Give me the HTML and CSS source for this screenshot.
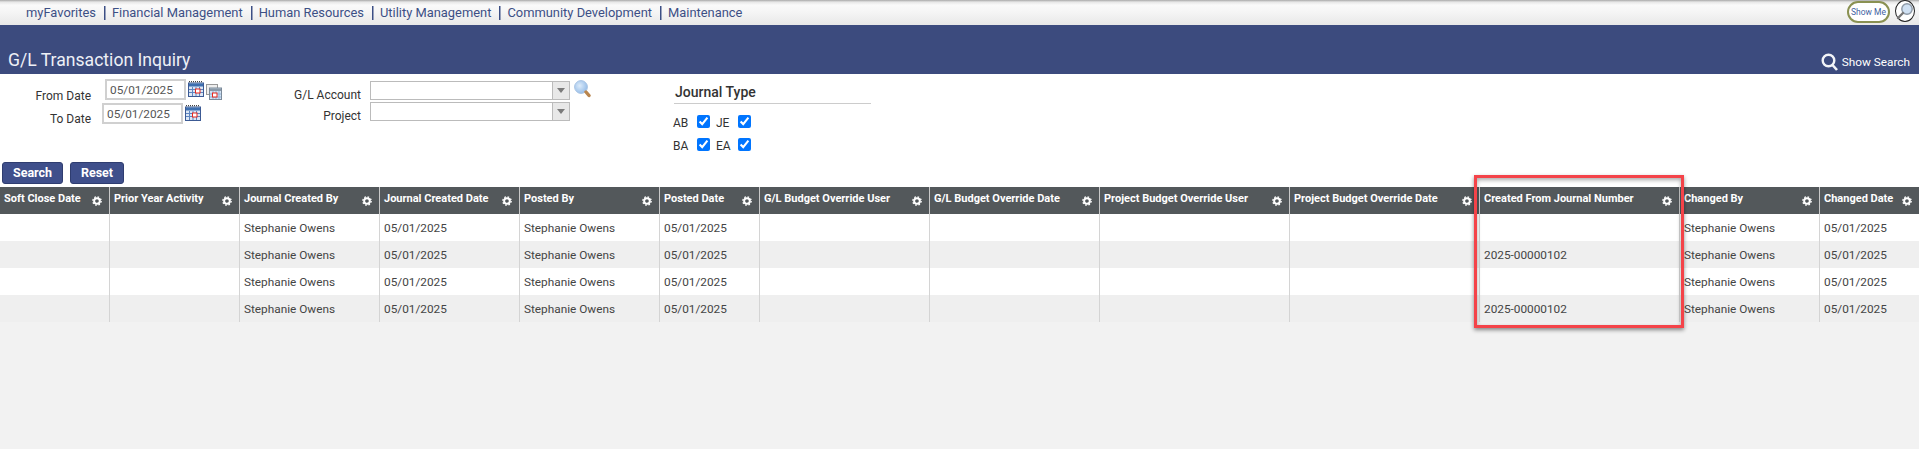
FILE: index.html
```html
<!DOCTYPE html>
<html lang="en">
<head>
<meta charset="utf-8">
<title>G/L Transaction Inquiry</title>
<link rel="stylesheet" href="styles.css">
</head>
<body>
<svg class="defs" width="0" height="0" aria-hidden="true">
  <symbol id="gear" viewBox="0 0 12 12">
    <circle cx="6" cy="6" r="3.4" fill="none" stroke="#fff" stroke-width="2.4"/>
    <circle cx="6" cy="6" r="5" fill="none" stroke="#fff" stroke-width="1.6" stroke-dasharray="2 1.93"/>
  </symbol>
  <symbol id="cal" viewBox="0 0 16 16">
    <rect x="0.5" y="2" width="15" height="13.5" fill="#dbe6f5" stroke="#3c5a94"/>
    <rect x="1" y="2.5" width="14" height="3" fill="#3d6fb0"/>
    <path d="M1 0.5h14" stroke="#444" stroke-width="1.4" stroke-dasharray="1 1"/>
    <path d="M1 8.5h14M1 11.5h14M4.5 6v9M8 6v9M11.5 6v9" stroke="#5f86c0" stroke-width="1"/>
    <rect x="7.5" y="8" width="4.5" height="4" fill="#fff" stroke="#e8261c"/>
  </symbol>
  <symbol id="calmulti" viewBox="0 0 16 16">
    <rect x="0.5" y="0.5" width="11" height="10" fill="#eee" stroke="#999"/>
    <rect x="3.5" y="4" width="12" height="11.5" fill="#d4e3f3" stroke="#7b8a9a"/>
    <rect x="4" y="4.5" width="11" height="2.5" fill="#8a99a8"/>
    <path d="M4 10h11M4 13h11M7 7v8M10 7v8M13 7v8" stroke="#8fb0d4"/>
    <rect x="6.5" y="9" width="4.5" height="4" fill="#fff" stroke="#e8261c"/>
  </symbol>
</svg>

<nav class="topnav">
  <ul class="menu">
    <li class="menu-item">myFavorites</li>
    <li class="menu-item">Financial Management</li>
    <li class="menu-item">Human Resources</li>
    <li class="menu-item">Utility Management</li>
    <li class="menu-item">Community Development</li>
    <li class="menu-item">Maintenance</li>
  </ul>
  <div class="nav-tools">
    <span class="showme">Show Me</span>
    <span class="globe">
      <svg width="18" height="18" viewBox="0 0 18 18">
        <circle cx="11" cy="7" r="5.2" fill="#cfe0f2" stroke="#8d99a6" stroke-width="1.4"/>
        <path d="M7 11 2 16" stroke="#777" stroke-width="2.4" stroke-linecap="round"/>
      </svg>
    </span>
  </div>
</nav>

<header class="banner">
  <h1 class="title">G/L Transaction Inquiry</h1>
  <div class="show-search">
    <svg width="17" height="18" viewBox="0 0 17 18">
      <circle cx="7.5" cy="7.5" r="5.8" fill="none" stroke="#f2f4f8" stroke-width="2.4"/>
      <path d="M11.5 12 16 17" stroke="#f2f4f8" stroke-width="2.6"/>
    </svg>
    <span>Show Search</span>
  </div>
</header>

<section class="search">
  <div class="filters">
    <div class="dates">
      <div class="date-row date-from">
        <label class="lbl date-lbl date-lbl-from">From Date</label>
        <input class="date-input date-input-from" type="text" value="05/01/2025">
        <svg class="cal"><use href="#cal"/></svg>
        <svg class="cal cal-multi"><use href="#calmulti"/></svg>
      </div>
      <div class="date-row date-to">
        <label class="lbl date-lbl date-lbl-to">To Date</label>
        <input class="date-input date-input-to" type="text" value="05/01/2025">
        <svg class="cal"><use href="#cal"/></svg>
      </div>
    </div>
    <div class="accounts">
      <div class="acct-row acct-first">
        <label class="lbl acct-lbl">G/L Account</label>
        <div class="combo"><span class="combo-btn"><i class="arrow"></i></span></div>
        <svg class="lookup" width="17" height="18" viewBox="0 0 17 18">
          <defs><radialGradient id="lens" cx="0.4" cy="0.4" r="0.7"><stop offset="0" stop-color="#dcebfa"/><stop offset="1" stop-color="#8db7e6"/></radialGradient></defs>
          <circle cx="7" cy="7" r="6.4" fill="url(#lens)" stroke="#a9c4e4"/>
          <path d="M12 12 15 15.5" stroke="#b9854e" stroke-width="3.4" stroke-linecap="round"/>
        </svg>
      </div>
      <div class="acct-row acct-second">
        <label class="lbl acct-lbl">Project</label>
        <div class="combo"><span class="combo-btn"><i class="arrow"></i></span></div>
      </div>
    </div>
    <div class="journal">
      <h2 class="journal-title">Journal Type</h2>
      <div class="check-grid">
        <label class="chk-lbl">AB</label><input class="chk" type="checkbox" checked>
        <label class="chk-lbl">JE</label><input class="chk" type="checkbox" checked>
        <label class="chk-lbl">BA</label><input class="chk" type="checkbox" checked>
        <label class="chk-lbl">EA</label><input class="chk" type="checkbox" checked>
      </div>
    </div>
  </div>
  <div class="actions">
    <button class="btn btn-search" type="button">Search</button>
    <button class="btn btn-reset" type="button">Reset</button>
  </div>
</section>

<main class="grid-wrap">
  <table class="grid">
    <colgroup>
      <col class="w110"><col class="w130"><col class="w140"><col class="w140"><col class="w140"><col class="w100"><col class="w170"><col class="w170"><col class="w190"><col class="w190"><col class="w200"><col class="w140"><col class="w99">
    </colgroup>
    <thead>
      <tr>
        <th><div class="th"><span>Soft Close Date</span><svg class="gear"><use href="#gear"/></svg></div></th>
        <th><div class="th"><span>Prior Year Activity</span><svg class="gear"><use href="#gear"/></svg></div></th>
        <th><div class="th"><span>Journal Created By</span><svg class="gear"><use href="#gear"/></svg></div></th>
        <th><div class="th"><span>Journal Created Date</span><svg class="gear"><use href="#gear"/></svg></div></th>
        <th><div class="th"><span>Posted By</span><svg class="gear"><use href="#gear"/></svg></div></th>
        <th><div class="th"><span>Posted Date</span><svg class="gear"><use href="#gear"/></svg></div></th>
        <th><div class="th"><span>G/L Budget Override User</span><svg class="gear"><use href="#gear"/></svg></div></th>
        <th><div class="th"><span>G/L Budget Override Date</span><svg class="gear"><use href="#gear"/></svg></div></th>
        <th><div class="th"><span>Project Budget Override User</span><svg class="gear"><use href="#gear"/></svg></div></th>
        <th><div class="th"><span>Project Budget Override Date</span><svg class="gear"><use href="#gear"/></svg></div></th>
        <th><div class="th"><span>Created From Journal Number</span><svg class="gear"><use href="#gear"/></svg></div></th>
        <th><div class="th"><span>Changed By</span><svg class="gear"><use href="#gear"/></svg></div></th>
        <th><div class="th"><span>Changed Date</span><svg class="gear"><use href="#gear"/></svg></div></th>
      </tr>
    </thead>
    <tbody>
      <tr><td></td><td></td><td>Stephanie Owens</td><td>05/01/2025</td><td>Stephanie Owens</td><td>05/01/2025</td><td></td><td></td><td></td><td></td><td></td><td>Stephanie Owens</td><td>05/01/2025</td></tr>
      <tr><td></td><td></td><td>Stephanie Owens</td><td>05/01/2025</td><td>Stephanie Owens</td><td>05/01/2025</td><td></td><td></td><td></td><td></td><td>2025-00000102</td><td>Stephanie Owens</td><td>05/01/2025</td></tr>
      <tr><td></td><td></td><td>Stephanie Owens</td><td>05/01/2025</td><td>Stephanie Owens</td><td>05/01/2025</td><td></td><td></td><td></td><td></td><td></td><td>Stephanie Owens</td><td>05/01/2025</td></tr>
      <tr><td></td><td></td><td>Stephanie Owens</td><td>05/01/2025</td><td>Stephanie Owens</td><td>05/01/2025</td><td></td><td></td><td></td><td></td><td>2025-00000102</td><td>Stephanie Owens</td><td>05/01/2025</td></tr>
    </tbody>
  </table>
  <div class="highlight"></div>
</main>
</body>
</html>
```
FILE: styles.css
```css
* { box-sizing: border-box; }
html, body { margin: 0; padding: 0; }
body {
  height: 449px;
  overflow: hidden;
  background: #f2f2f2;
  font-family: Roboto, "Liberation Sans", sans-serif;
  color: #3a3a3a;
}
.defs { position: absolute; }

/* top nav */
.topnav {
  height: 25px;
  display: flex;
  justify-content: space-between;
  background: linear-gradient(#a8a8a8 0, #e6e6e6 2px, #fafafa 5px, #f5f5f5 12px, #e8e8e8 25px);
}
.menu {
  list-style: none;
  margin: 0;
  padding: 4px 0 0 26px;
  display: flex;
  font-size: 12.9px;
  line-height: 17px;
  color: #3c4f85;
}
.menu-item { padding-right: 8px; }
.menu-item + .menu-item { padding-left: 8px; background: linear-gradient(#3c4f85, #3c4f85) left 2px / 1.5px 14px no-repeat; }
.nav-tools { display: flex; align-items: flex-start; padding: 1px 4px 0 0; gap: 5px; }
.showme {
  width: 43px;
  height: 22px;
  border: 2px solid #8a9152;
  border-radius: 11px;
  background: #fff;
  font-size: 8.5px;
  line-height: 18px;
  text-align: center;
  color: #3f5f9f;
}
.globe {
  width: 20px;
  height: 22px;
  margin-top: -1px;
  border: 1px solid #222;
  border-radius: 50%;
  background: #fff;
  display: flex;
  align-items: center;
  justify-content: center;
}

/* banner */
.banner {
  height: 49px;
  background: #3c4b7e;
  display: flex;
  justify-content: space-between;
  align-items: flex-start;
  color: #fff;
}
.title {
  margin: 0;
  padding: 23px 0 0 8px;
  font-weight: 400;
  font-size: 17.6px;
  line-height: 24px;
  color: #eef0f6;
}
.show-search {
  display: flex;
  align-items: center;
  gap: 4px;
  padding: 28px 9px 0 0;
  font-size: 11.8px;
  line-height: 18px;
}

/* search form */
.search { height: 113px; background: #fff; }
.filters { display: flex; height: 88px; }
.lbl { font-size: 12px; line-height: 16px; color: #333; text-align: right; }
.dates { width: 270px; }
.date-row { display: flex; align-items: flex-start; }
.date-from { height: 26px; padding-top: 5px; }
.date-to { padding-top: 3px; }
.date-lbl { width: 91px; }
.date-lbl-from { padding-top: 9px; }
.date-lbl-to { padding-top: 8px; }
.date-input {
  width: 81px;
  height: 21px;
  border: 2px solid #d0d0d0;
  padding: 0 0 0 3px;
  font: 11.8px Roboto, sans-serif;
  color: #555;
  background: #fff;
}
.date-input-from { margin-left: 14px; }
.date-input-to { margin-left: 11px; }
.cal { width: 16px; height: 16px; margin: 2px 0 0 2px; }
.cal-multi { margin-top: 5px; }
.accounts { width: 404px; }
.acct-row { display: flex; align-items: flex-start; }
.acct-first { height: 26px; padding-top: 7px; }
.acct-second { padding-top: 2px; }
.acct-lbl { width: 91px; padding-top: 6px; }
.combo {
  width: 200px;
  height: 19px;
  margin-left: 9px;
  border: 1px solid #bbb;
  background: #fff;
  display: flex;
  justify-content: flex-end;
}
.combo-btn {
  width: 17px;
  background: #e8e8e8;
  border-left: 1px solid #bbb;
  display: flex;
  align-items: center;
  justify-content: center;
}
.arrow {
  width: 0;
  height: 0;
  border-left: 4px solid transparent;
  border-right: 4px solid transparent;
  border-top: 5px solid #7b7b7b;
}
.lookup { margin: -1px 0 0 4px; }
.journal { width: 197px; padding-top: 10px; }
.journal-title {
  margin: 0;
  height: 20px;
  padding-left: 1px;
  border-bottom: 1px solid #ccc;
  font-size: 14px;
  font-weight: 500;
  line-height: 17px;
  color: #333;
}
.check-grid {
  display: grid;
  grid-template-columns: 23.5px 19.5px 22px 13px;
  grid-auto-rows: 13px;
  row-gap: 10px;
  margin: 11px 0 0 -1px;
  align-items: center;
  width: 80px;
}
.chk-lbl { font-size: 12px; line-height: 13px; color: #333; padding-top: 3px; }
.chk { width: 13px; height: 13px; margin: 0; }
.actions { display: flex; gap: 7px; padding: 0 0 0 2px; }
.btn {
  height: 22px;
  border: 1px solid #2f3d70;
  border-radius: 3px;
  background: #3f4f8b;
  color: #fff;
  font: 700 12.5px/18px Roboto, sans-serif;
  padding: 0;
}
.btn-search { width: 61px; }
.btn-reset { width: 54px; }

/* table */
.grid-wrap { position: relative; }
.grid {
  border-collapse: separate;
  border-spacing: 0;
  table-layout: fixed;
  width: 1919px;
}
.w110 { width: 110px; } .w130 { width: 130px; } .w140 { width: 140px; }
.w100 { width: 100px; } .w170 { width: 170px; } .w190 { width: 190px; }
.w200 { width: 200px; } .w99 { width: 99px; }
.grid th {
  height: 27px;
  padding: 0;
  background: #53585b;
  border-right: 1px solid #c9c9c9;
  vertical-align: top;
}
.grid th:last-child, .grid td:last-child { border-right: 0; }
.th {
  display: flex;
  justify-content: space-between;
  padding: 4px 7px 0 4px;
  color: #fff;
  font-size: 11px;
  font-weight: 700;
  line-height: 16px;
  text-align: left;
}
.gear { width: 10px; height: 10px; margin-top: 5px; flex: none; }
.grid td {
  height: 27px;
  padding: 0 4px;
  border-right: 1px solid #d4d4d4;
  font-size: 11.8px;
  line-height: 16px;
  color: #444;
  background: #fff;
  white-space: nowrap;
}
.grid tbody tr:nth-child(even) td { background: #efefef; }
.highlight {
  position: absolute;
  left: 1474px;
  top: -12px;
  width: 210px;
  height: 153px;
  border: 3px solid #f44349;
  box-shadow: 0 2px 4px rgba(0,0,0,.45), inset 0 2px 4px rgba(0,0,0,.35);
  pointer-events: none;
}
```
